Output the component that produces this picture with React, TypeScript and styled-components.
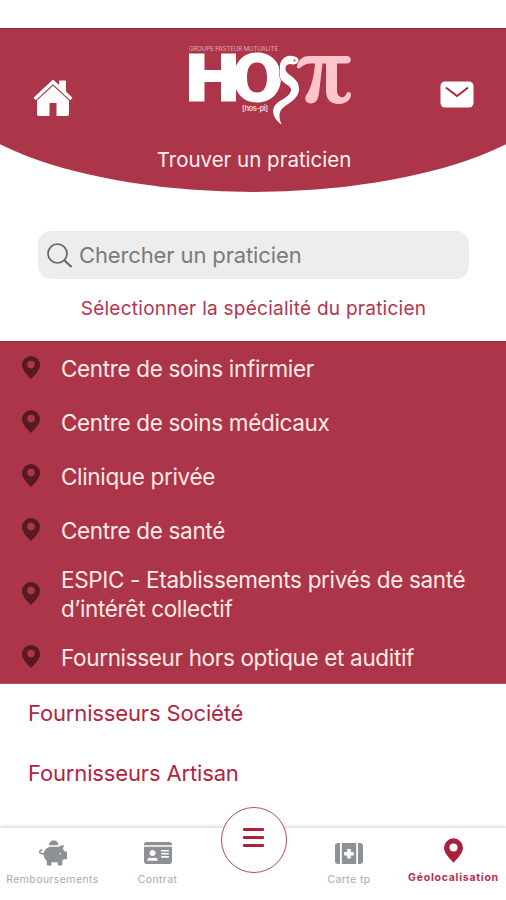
import React from "react";
import styled, { createGlobalStyle, css } from "styled-components";
import { FaPiggyBank, FaIdCard } from "react-icons/fa";

const RED = "#ac3549";
const CRIMSON = "#ab1f3c";

const GlobalStyle = createGlobalStyle`
  * { box-sizing: border-box; }
  body { margin: 0; background: #fff; font-family: Inter, "Liberation Sans", sans-serif; }
`;

const Screen = styled.div`
  width: 506px;
  height: 900px;
  padding-top: 28px;
  display: flex;
  flex-direction: column;
  overflow: hidden;
  background: #fff;
`;

const Header = styled.header`
  height: 164px;
  flex: none;
  display: grid;
  grid-template-columns: 90px 1fr 90px;
  grid-template-rows: 112px 38px;
  background: ${RED};
  border-top: 1px solid #a12742;
  clip-path: ellipse(321px 124px at 50% 40px);
`;

const HeaderAction = styled.button<{ $side: "left" | "right" }>`
  border: 0;
  padding: 0;
  background: none;
  color: #fff;
  display: flex;
  align-items: flex-start;
  padding-top: ${(p) => (p.$side === "left" ? 50 : 52)}px;
  padding-left: ${(p) => (p.$side === "left" ? 33 : 24)}px;
`;

const LogoSlot = styled.div`
  padding: 13px 0 0 98px;
  svg { display: block; }
`;

const Title = styled.h1`
  grid-column: 1 / -1;
  margin: 0;
  padding-left: 2px;
  text-align: center;
  font-size: 20.5px;
  line-height: 38px;
  font-weight: 400;
  letter-spacing: 0;
  color: #fff0ef;
`;

const SearchField = styled.label`
  flex: none;
  margin: 39px 37px 0 38px;
  height: 48px;
  padding-left: 9px;
  display: flex;
  align-items: center;
  gap: 7px;
  border-radius: 13px;
  background: #ededed;
`;

const SearchInput = styled.input`
  flex: 1;
  min-width: 0;
  border: 0;
  padding: 0;
  outline: 0;
  background: transparent;
  font: 400 22px Inter, sans-serif;
  letter-spacing: -0.13px;
  color: #777;
  &::placeholder { color: #7b7b7b; opacity: 1; }
`;

const Prompt = styled.p`
  flex: none;
  margin: 0;
  padding: 16px 0 0 1px;
  height: 62px;
  text-align: center;
  font-size: 19px;
  line-height: 28px;
  letter-spacing: 0.26px;
  color: #b33450;
`;

const Specialties = styled.ul`
  flex: none;
  height: 343px;
  margin: 0;
  padding: 0;
  list-style: none;
  background: ${RED};
  border-top: 1px solid #a01e3a;
  border-bottom: 1px solid #b65062;
`;

const Specialty = styled.li<{ $tall?: boolean }>`
  height: ${(p) => (p.$tall ? 73 : 54)}px;
  padding: 0 0 1px 22px;
  display: flex;
  align-items: center;
  gap: 21px;
  color: #ffebe6;
  font-size: 22.5px;
  line-height: 29px;
  letter-spacing: -0.34px;
  white-space: pre-line;
  svg { flex: none; margin-top: -2px; }
`;

const Suppliers = styled.ul`
  flex: 1;
  margin: 0;
  padding: 0 0 0 28px;
  list-style: none;
`;

const Supplier = styled.li`
  height: 59.5px;
  font-size: 22px;
  line-height: 59.5px;
  letter-spacing: -0.15px;
  color: #b02443;
`;

const TabBar = styled.nav`
  flex: none;
  height: 72px;
  display: grid;
  grid-template-columns: 105px 105px 87px 104px 105px;
  background: #fff;
  box-shadow: 0 -2px 3px rgba(0, 0, 0, 0.14);
`;

const Tab = styled.button<{ $active?: boolean }>`
  border: 0;
  padding: ${(p) => (p.$active ? 7 : 10)}px 0 0;
  background: none;
  display: flex;
  flex-direction: column;
  align-items: center;
  color: #8d9095;
  font-family: Inter, sans-serif;
  ${(p) => p.$active && css`color: ${CRIMSON};`}
`;

const IconBox = styled.span`
  height: 30px;
  display: flex;
  align-items: center;
`;

const TabLabel = styled.span<{ $active?: boolean }>`
  font-size: 10.5px;
  line-height: 14px;
  margin-top: ${(p) => (p.$active ? 6 : 5)}px;
  white-space: nowrap;
  letter-spacing: ${(p) => (p.$active ? 0.75 : 0.4)}px;
  font-weight: ${(p) => (p.$active ? 700 : 400)};
  color: ${(p) => (p.$active ? "#b5304b" : "#aaa")};
`;

const MenuButton = styled.button`
  width: 66px;
  height: 66px;
  justify-self: center;
  margin-top: -21px;
  border: 1.5px solid #b94761;
  border-radius: 50%;
  padding: 0 0 5px;
  background: #fff;
  display: flex;
  flex-direction: column;
  align-items: center;
  justify-content: center;
  gap: 5px;
`;

const MenuBar = styled.span`
  width: 21px;
  height: 3px;
  border-radius: 1px;
  background: #b1203b;
`;

const Pin = ({ width = 18, height = 23, color = "#591923" }) => (
  <svg width={width} height={height} viewBox="0 0 18 23">
    <path
      fill={color}
      fillRule="evenodd"
      d="M9 0a9 9 0 0 0-9 9c0 5 5.200 10.200 9 14 3.800-3.800 9-9 9-14a9 9 0 0 0-9-9Zm0 4.800a3.800 3.800 0 1 1 0 7.600 3.800 3.800 0 0 1 0-7.600Z"
    />
  </svg>
);

const HomeIcon = () => (
  <svg width="40" height="38" viewBox="0 0 40 38" fill="#fff">
    <path d="M20 .5 26 6V2.500a1 1 0 0 1 1-1h5a1 1 0 0 1 1 1v10l6.500 6.300-2.200 2.400L20 5.200 2.700 21.200.5 18.800Z" />
    <path d="M20 6.800 36 21.500v13.500q0 2-2 2H23.500V24h-7v13H6q-2 0-2-2V21.500Z" />
  </svg>
);

const Logo = () => (
  <svg width="166" height="84" viewBox="0 0 166 84">
    <g fontFamily="Inter, sans-serif">
      <text x="1" y="9" fontSize="6" fill="#e4aab3" textLength="89">GROUPE PASTEUR MUTUALITÉ</text>
      <text x="54" y="69" fontSize="7.500" fontWeight="600" fill="#f5d5d8" textLength="26">[hos-pi]</text>
    </g>
    <path fill="#fff" d="M1 11.500h15.500V28H33V11.500h15V59.500H33V40H16.500V59.500H1Z" />
    <path
      fill="#fff"
      fillRule="evenodd"
      d="M69 10.500c14 0 24 10 24 25S83 60.500 69 60.500 46 50.500 46 35.500s9-25 23-25Zm0 10c-7 0-10 6-10 15s3 15 10 15 10-6 10-15-3-15-10-15Z"
    />
    <path
      d="M93.500 82.500C86.500 78 83 70 86.500 64c4-6 14-8 16.500-15 1.500-6-9.500-7-11-14-.7-3 .3-6 0-9C91 18 98 12.500 104 14c5 .5 7 2.500 6.500 5-.5 3-5 4-8 3-4 0-6 3-4.500 7 2 4 8 5.500 11.500 11.500 4 9 0 15-8 20.500-9.500 6-12.500 9.500-8 21.500Z"
      fill="#fff"
      stroke={RED}
      strokeWidth="1"
      paintOrder="stroke"
    />
    <circle cx="106.500" cy="18.500" r="1" fill={RED} />
    <path
      fill="#ffc5ca"
      d="M109 24c2-7 6-10 13-10h37c5 0 5 7.500 0 7.500h-10V48c0 9 8 9 9.500 3.500 1-2.500 4.500-2 4.500 1 0 5-5 9.500-12 9.500-9 0-13-5-13-14V21.500h-3.500L131 51c-1 7-3.500 10.500-8 10.500-5 0-7-4-5-8 5-7 8-19 9-32h-4c-5 0-8 2-11 4.500-2 1-3.500 0-3-2Z"
    />
  </svg>
);

const MailIcon = () => (
  <svg width="34" height="27" viewBox="0 0 34 27">
    <rect width="33" height="26" x=".5" y=".5" rx="4.500" fill="#fff" />
    <path d="m6.500 7 10.500 8L27.500 7" fill="none" stroke={CRIMSON} strokeWidth="1.800" strokeLinecap="round" />
  </svg>
);

const SearchIcon = () => (
  <svg width="25" height="25" viewBox="0 0 25 25" fill="none" stroke="#666" strokeWidth="1.700">
    <circle cx="10.500" cy="10.500" r="9.500" />
    <path d="m17.500 17.500 7 6.500" strokeWidth="2" />
  </svg>
);

const HealthCardIcon = () => (
  <svg width="28" height="23" viewBox="0 0 28 23" fill="currentColor">
    <path d="M3 1h2v21H3a3 3 0 0 1-3-3V4a3 3 0 0 1 3-3ZM23 1h2a3 3 0 0 1 3 3v15a3 3 0 0 1-3 3h-2Z" />
    <path fillRule="evenodd" d="M6.800 1h14.400v21H6.800ZM12.200 7v3H9.200v3.600h3v3h3.600v-3h3V10h-3V7Z" />
  </svg>
);

const specialties = [
  { label: "Centre de soins infirmier" },
  { label: "Centre de soins médicaux" },
  { label: "Clinique privée" },
  { label: "Centre de santé" },
  { label: "ESPIC - Etablissements privés de santé\nd’intérêt collectif", tall: true },
  { label: "Fournisseur hors optique et auditif" },
];

export default function App() {
  return (
    <>
      <GlobalStyle />
      <Screen>
        <Header>
          <HeaderAction $side="left" aria-label="Accueil"><HomeIcon /></HeaderAction>
          <LogoSlot><Logo /></LogoSlot>
          <HeaderAction $side="right" aria-label="Messages"><MailIcon /></HeaderAction>
          <Title>Trouver un praticien</Title>
        </Header>
        <SearchField>
          <SearchIcon />
          <SearchInput placeholder="Chercher un praticien" />
        </SearchField>
        <Prompt>Sélectionner la spécialité du praticien</Prompt>
        <Specialties>
          {specialties.map((s) => (
            <Specialty key={s.label} $tall={s.tall}><Pin />{s.label}</Specialty>
          ))}
        </Specialties>
        <Suppliers>
          <Supplier>Fournisseurs Société</Supplier>
          <Supplier>Fournisseurs Artisan</Supplier>
        </Suppliers>
        <TabBar>
          <Tab>
            <IconBox><FaPiggyBank size={28} /></IconBox>
            <TabLabel>Remboursements</TabLabel>
          </Tab>
          <Tab>
            <IconBox><FaIdCard size={28} /></IconBox>
            <TabLabel>Contrat</TabLabel>
          </Tab>
          <MenuButton aria-label="Menu"><MenuBar /><MenuBar /><MenuBar /></MenuButton>
          <Tab>
            <IconBox><HealthCardIcon /></IconBox>
            <TabLabel>Carte tp</TabLabel>
          </Tab>
          <Tab $active>
            <IconBox><Pin width={19} height={25} color={CRIMSON} /></IconBox>
            <TabLabel $active>Géolocalisation</TabLabel>
          </Tab>
        </TabBar>
      </Screen>
    </>
  );
}
